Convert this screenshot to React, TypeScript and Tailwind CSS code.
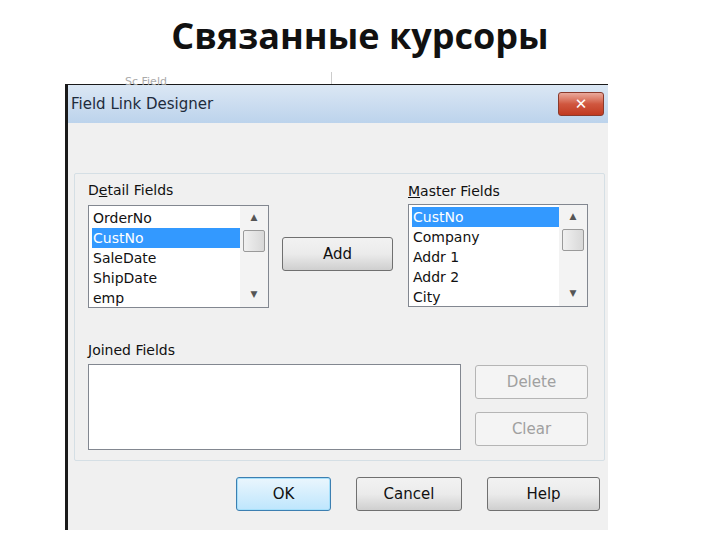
import React from "react";

const f = { fontFamily: '"DejaVu Sans", Verdana, sans-serif' };

function Btn({ label, w, disabled, def }: { label: string; w: number; disabled?: boolean; def?: boolean }) {
  return (
    <div
      style={{ width: w }}
      className={`h-[34px] rounded-[3px] border flex items-center justify-center text-[15px] ${
        disabled
          ? "border-[#b5b5b5] bg-[#f4f4f4] text-[#a0a0a0]"
          : def
          ? "border-[#3c7fb1] bg-gradient-to-b from-[#eaf6fd] to-[#bee6fd] text-[#111] shadow-[inset_0_0_0_1px_#a6e0fb]"
          : "border-[#707070] bg-gradient-to-b from-[#f2f2f2] via-[#ebebeb] to-[#cfcfcf] text-[#111]"
      }`}
    >
      {label}
    </div>
  );
}

function ListBox({ items, sel, w }: { items: string[]; sel: number; w: number }) {
  return (
    <div style={{ width: w }} className="h-[103px] border border-[#828790] bg-white flex">
      <div className="flex-1 pt-[2px] pl-[3px]">
        {items.map((it, i) => (
          <div
            key={it}
            className={`h-[20px] leading-[20px] text-[14px] pl-[1px] ${i === sel ? "bg-[#3399ff] text-white" : "text-[#111]"}`}
          >
            {it}
          </div>
        ))}
      </div>
      <div className="w-[28px] bg-[#f3f3f3] flex flex-col items-center">
        <div className="h-[24px] flex items-center text-[9px] text-[#555]">▲</div>
        <div className="w-[22px] h-[22px] border border-[#9a9a9a] rounded-[2px] bg-gradient-to-r from-[#f0f0f0] to-[#d8d8d8]" />
        <div className="flex-1" />
        <div className="h-[24px] flex items-center text-[9px] text-[#555]">▼</div>
      </div>
    </div>
  );
}

export default function App() {
  return (
    <div className="w-[720px] h-[540px] bg-white relative overflow-hidden" style={f}>
      <div className="h-[78px] flex justify-center pt-[14px]">
        <div className="text-[36px] font-bold text-[#111] leading-[44px]" style={{ fontFamily: '"Open Sans", "Noto Sans", sans-serif' }}>
          Связанные курсоры
        </div>
      </div>
      <div className="ml-[65px] w-[543px] h-[452px] flex flex-col">
        <div className="h-[6px] relative">
          <div className="absolute left-[60px] top-[-4px] text-[11px] text-[#aaa]">Sc Field</div>
          <div className="absolute left-[266px] top-[-6px] h-[12px] w-px bg-[#ccc]" />
        </div>
        <div className="flex-1 border-l-[3px] border-t border-[#1a1a1a] flex flex-col">
          <div className="h-[38px] bg-gradient-to-b from-[#dbe7f4] to-[#bcd3ec] flex items-center justify-between pl-[3px] pr-[4px]">
            <div className="text-[15px] text-[#1e2b3c]">Field Link Designer</div>
            <div className="w-[46px] h-[24px] rounded-[3px] border border-[#8a3a2c] bg-gradient-to-b from-[#e9a99c] via-[#d0573f] to-[#c1391f] flex items-center justify-center text-white font-bold text-[15px]">
              ✕
            </div>
          </div>
          <div className="flex-1 bg-[#f0f0f0] pl-[6px] pr-[3px] pt-[50px]">
            <div className="h-[288px] border border-[#d5dfe5] rounded-[2px] px-[13px] pt-[6px]">
              <div className="flex items-end">
                <div>
                  <div className="text-[14px] text-[#111] mb-[4px]">D<u>e</u>tail Fields</div>
                  <ListBox w={181} sel={1} items={["OrderNo", "CustNo", "SaleDate", "ShipDate", "emp"]} />
                </div>
                <div className="ml-[13px] mb-[37px]">
                  <Btn label="Add" w={111} />
                </div>
                <div className="ml-[15px] mb-[1px]">
                  <div className="text-[14px] text-[#111] mb-[2px]"><u>M</u>aster Fields</div>
                  <ListBox w={180} sel={0} items={["CustNo", "Company", "Addr 1", "Addr 2", "City"]} />
                </div>
              </div>
              <div className="mt-[32px] text-[14px] text-[#111]"><u>J</u>oined Fields</div>
              <div className="flex mt-[3px]">
                <div className="w-[373px] h-[86px] bg-white border border-[#828790]" />
                <div className="ml-[14px] flex flex-col gap-[13px] pt-[1px]">
                  <Btn label="Delete" w={113} disabled />
                  <Btn label="Clear" w={113} disabled />
                </div>
              </div>
            </div>
            <div className="flex justify-end gap-[25px] mt-[16px] pr-[5px]">
              <Btn label="OK" w={95} def />
              <Btn label="Cancel" w={106} />
              <Btn label="Help" w={113} />
            </div>
          </div>
        </div>
      </div>
    </div>
  );
}
